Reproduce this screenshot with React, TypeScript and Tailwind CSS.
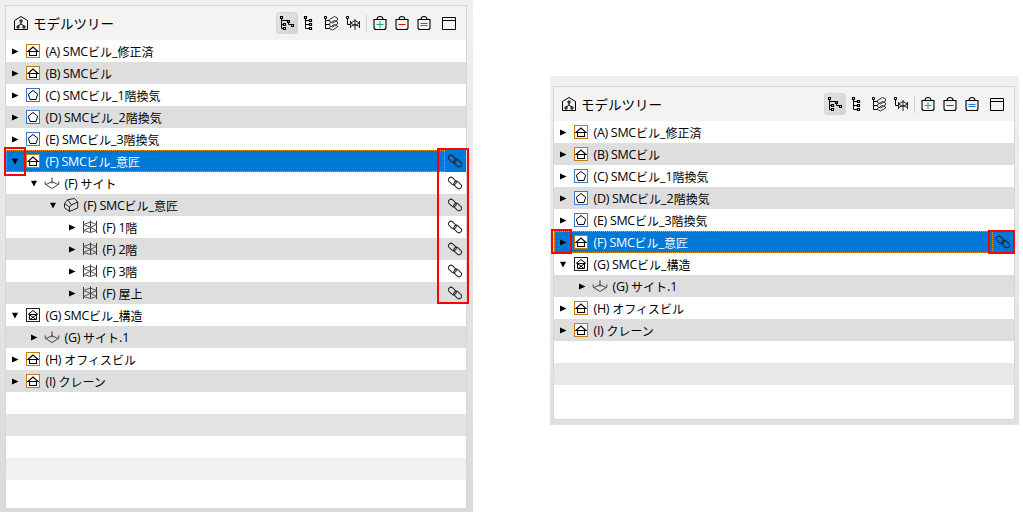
import type { ReactNode } from 'react';

type IconKind = 'house' | 'pentagon' | 'structure' | 'site' | 'building' | 'floor';

type Row = {
  code: string;
  latin?: string;
  jp: string;
  suffix?: string;
  tail?: string;
  icon: IconKind;
  depth: number;
  open?: boolean;
  selected?: boolean;
  linked?: boolean;
};

const top: Row[] = [
  { code: '(A)', latin: 'SMC', jp: 'ビル', suffix: '_', tail: '修正済', icon: 'house', depth: 0 },
  { code: '(B)', latin: 'SMC', jp: 'ビル', icon: 'house', depth: 0 },
  { code: '(C)', latin: 'SMC', jp: 'ビル', suffix: '_1', tail: '階換気', icon: 'pentagon', depth: 0 },
  { code: '(D)', latin: 'SMC', jp: 'ビル', suffix: '_2', tail: '階換気', icon: 'pentagon', depth: 0 },
  { code: '(E)', latin: 'SMC', jp: 'ビル', suffix: '_3', tail: '階換気', icon: 'pentagon', depth: 0 },
];

const bottom: Row[] = [
  { code: '(G)', latin: 'SMC', jp: 'ビル', suffix: '_', tail: '構造', icon: 'structure', depth: 0, open: true },
  { code: '(G)', jp: 'サイト', suffix: '.1', icon: 'site', depth: 1 },
  { code: '(H)', jp: 'オフィスビル', icon: 'house', depth: 0 },
  { code: '(I)', jp: 'クレーン', icon: 'house', depth: 0 },
];

const selectedRow: Row = {
  code: '(F)', latin: 'SMC', jp: 'ビル', suffix: '_', tail: '意匠', icon: 'house', depth: 0, selected: true, linked: true,
};

const expandedRows: Row[] = [
  ...top,
  { ...selectedRow, open: true },
  { code: '(F)', jp: 'サイト', icon: 'site', depth: 1, open: true, linked: true },
  { code: '(F)', latin: 'SMC', jp: 'ビル', suffix: '_', tail: '意匠', icon: 'building', depth: 2, open: true, linked: true },
  { code: '(F)', latin: '1', jp: '階', icon: 'floor', depth: 3, linked: true },
  { code: '(F)', latin: '2', jp: '階', icon: 'floor', depth: 3, linked: true },
  { code: '(F)', latin: '3', jp: '階', icon: 'floor', depth: 3, linked: true },
  { code: '(F)', jp: '屋上', icon: 'floor', depth: 3, linked: true },
  ...bottom,
];

const collapsedRows: Row[] = [...top, selectedRow, ...bottom];

const indents = ['pl-1.5', 'pl-[25px]', 'pl-[44px]', 'pl-[63px]'];

function Glyph({ children, className = '' }: { children: ReactNode; className?: string }) {
  return (
    <svg viewBox="0 0 16 16" className={`block h-4 w-4 shrink-0 ${className}`} fill="none" stroke="#000" strokeWidth="1">
      {children}
    </svg>
  );
}

function RowIcon({ kind }: { kind: IconKind }) {
  if (kind === 'house') {
    return (
      <Glyph>
        <rect x="1.5" y="1.5" width="13" height="13" fill="#fff" stroke="#c27c0e" />
        <path d="M3 8.5 8 4l5 4.5zM4.5 8.5v4h7v-4" strokeWidth="1.1" />
      </Glyph>
    );
  }
  if (kind === 'pentagon') {
    return (
      <Glyph>
        <rect x="1.5" y="1.5" width="13" height="13" fill="#fff" stroke="#3f78c3" />
        <path d="M8 3.5 12.7 7.2 11 12.5H5L3.3 7.2z" />
      </Glyph>
    );
  }
  if (kind === 'structure') {
    return (
      <Glyph>
        <rect x="1.5" y="1.5" width="13" height="13" fill="#fff" stroke="#222" />
        <path d="M3 7.5 8 3.5l5 4M4.5 6.5v6h7v-6M4.5 7.5h7M5 8l6 4.5M11 8l-6 4.5" />
      </Glyph>
    );
  }
  if (kind === 'site') {
    return (
      <Glyph>
        <path d="M8 2.5v6" stroke="#333" />
        <path d="M1.2 6.5v2.7L8 13.5l6.800-4.300V6.500M2 9.500l6-2.800 6 2.800" stroke="#444" />
      </Glyph>
    );
  }
  if (kind === 'building') {
    return (
      <Glyph>
        <path d="M1.5 6.5 4.500 2.800 11.500 1.500 14.700 5 8.500 8 4.500 2.800M1.500 6.500v4.200L6.500 14.500V10L1.500 6.500M6.500 10l2-2M6.500 14.500l8.200-3.500V5" stroke="#222" />
      </Glyph>
    );
  }
  return (
    <Glyph>
      <path d="M1.5 2v12M14.5 2v12M8.500 1.500v12" stroke="#333" />
      <path d="M1.500 5.500 8.500 3l6 2.500-6 2.800zM1.500 11.500l7-3.200 6 3.200-6 2z" stroke="#555" />
    </Glyph>
  );
}

function LinkIcon() {
  return (
    <Glyph>
      <g strokeWidth="1" stroke="#222">
        <rect x="1" y="3.5" width="8.6" height="5" rx="2.5" transform="rotate(43 5.3 6)" />
        <rect x="6.4" y="7.5" width="8.6" height="5" rx="2.5" transform="rotate(43 10.7 10)" />
      </g>
    </Glyph>
  );
}

function TreeRow({ row }: { row: Row }) {
  return (
    <div
      className={`flex h-[22px] ${row.selected ? 'bg-[#0078d7] text-white' : 'text-black odd:bg-white even:bg-[#dedede]'}`}
    >
      <div
        className={`flex flex-1 items-center ${indents[row.depth]} ${
          row.selected ? 'outline-1 -outline-offset-1 outline-dotted outline-[#ff9428]' : ''
        }`}
      >
        <svg viewBox="0 0 7 7" className="h-[7px] w-[7px] shrink-0 fill-black">
          <path d={row.open ? 'M0 .8h6L3 6.500z' : 'M0 .5v6L6.500 3.500z'} />
        </svg>
        <span className="ml-1.5">
          <RowIcon kind={row.icon} />
        </span>
        <span className="ml-[4.500px] flex pt-px whitespace-pre font-['Open_Sans','Noto_Sans_CJK_JP',sans-serif] text-[12.5px] leading-[21px]">
          <span className="tracking-[-0.3px]">{row.code} {row.latin}</span>
          <span className="font-['Noto_Sans_CJK_JP',sans-serif] text-[12px]">{row.jp}</span>
          <span>{row.suffix}</span>
          <span className="font-['Noto_Sans_CJK_JP',sans-serif] text-[12px]">{row.tail}</span>
        </span>
      </div>
      <div className="flex w-[21px] items-center pl-0.5">{row.linked && <LinkIcon />}</div>
    </div>
  );
}

function BagIcon({ mark, color }: { mark: string; color: string }) {
  return (
    <span className="flex w-[22px] justify-center pl-1">
      <Glyph>
        <path d="M2 4.5h12v8q0 2-2 2H4q-2 0-2-2zM5 4.500q0-3 3-3t3 3" strokeWidth="1.100" />
        <path d={mark} className={color} />
      </Glyph>
    </span>
  );
}

function TreeTools() {
  return (
    <div className="flex items-center">
      <span className="flex h-[22px] w-[22px] items-center justify-center rounded-[3px] border border-[#d6d6d6] bg-linear-to-br from-[#e5e5e5] to-[#d2d2d2]">
        <Glyph>
          <path d="M2.5 3v10.5h2M2.5 5.5h6M2.5 9.5h2M9.5 6.5v3h3" />
          <path d="M1.500 1.500h2v2h-2zM8.500 5.500h2v2h-2zM4.500 8.500h2v2h-2zM4.500 12.500h2v2h-2zM12.500 9.500h2v2h-2z" strokeWidth="1.100" />
        </Glyph>
      </span>
      <span className="flex w-[22px] justify-center">
        <Glyph>
          <path d="M4.500 3v10.500h4M4.500 5.500h4M4.500 9.500h4" />
          <path d="M3.500 1.500h2v2h-2zM8.500 4.500h2v2h-2zM8.500 8.500h2v2h-2zM8.500 12.500h2v2h-2z" strokeWidth="1.200" />
        </Glyph>
      </span>
      <span className="flex w-[22px] justify-center">
        <Glyph>
          <path d="M2.500 3v10.500h4M2.500 5.500h4M2.500 9.500h4M1.500 1.500h2v2h-2z" />
          <path
            d="M6.500 4.500 11.500 1.500l3 1.500v2L9.500 8l-3-1.500zM6.500 8.500l5-3 3 1.500v2l-5 3-3-1.500zM6.500 12.500l5-3 3 1.500v1l-5 3-3-1.500z"
            stroke="#333"
          />
        </Glyph>
      </span>
      <span className="flex w-[22px] justify-center">
        <Glyph>
          <path d="M2.500 3v6.500h3M1.500 1.500h2v2h-2z" />
          <path d="M5.500 6v7M14.500 6v7M10 4v11M5.500 8 10 5.500 14.500 8 10 10.500zM5.500 11.500l4.500-2 4.500 2" stroke="#222" />
        </Glyph>
      </span>
      <span className="ml-0.5 h-[17px] w-px bg-[#d0d0d0]" />
      <BagIcon mark="M4.500 9.500h7M8 6v7" color="stroke-[#00b96b]" />
      <BagIcon mark="M4.500 9.500h7" color="stroke-[#f00000]" />
      <BagIcon mark="M4.500 8.500h7M4.500 10.500h7" color="stroke-[#1878d0]" />
      <Glyph className="ml-2">
        <path d="M1.500 2.500h13v12h-13zM1.500 5.500h13" />
      </Glyph>
    </div>
  );
}

function ModelTree({ rows, children }: { rows: Row[]; children: ReactNode }) {
  return (
    <div className="flex w-[462px] flex-1 flex-col border border-[#d6d6d6] bg-white">
      <div className="flex h-[34px] shrink-0 items-center justify-between bg-[#f3f3f3] pr-[9px] pl-[7px]">
        <div className="flex items-center gap-1">
          <Glyph>
            <path d="M1.500 14.500V5.500L8 1.500l6.500 4v9z" />
            <path d="M7 5h2v2H7zM4 11h2v2H4zM10 11h2v2h-2zM8 7v2M5 11l3-2 3 2" />
          </Glyph>
          <h2 className="font-['Noto_Sans_CJK_JP',sans-serif] text-[13.5px] leading-5 font-normal text-black">モデルツリー</h2>
        </div>
        <TreeTools />
      </div>
      <div>
        {rows.map((row, index) => (
          <TreeRow key={index} row={row} />
        ))}
      </div>
      {children}
    </div>
  );
}

export default function App() {
  return (
    <main className="relative flex h-[512px] w-[1023px] overflow-hidden bg-white">
      <section className="flex h-[512px] w-[473px] bg-linear-to-b from-[#f0f0f0] to-[#dadada] pt-[5px] pb-[3px] pl-[5px]">
        <ModelTree rows={expandedRows}>
          <div className="mt-[22px] h-[22px] bg-[#e4e4e4]" />
          <div className="mt-[22px] h-[22px] bg-[#f1f1f1]" />
        </ModelTree>
        <div className="w-1.5 shrink-0" />
      </section>
      <section className="mt-[76px] ml-[77px] flex h-[349px] w-[469px] bg-linear-to-b from-[#f0f0f0] to-[#e0e0e0] pt-2.5 pb-[5px] pl-[3px]">
        <ModelTree rows={collapsedRows}>
          <div className="mt-[22px] h-[22px] bg-[#e8e8e8]" />
        </ModelTree>
        <div className="w-1 shrink-0" />
      </section>

      {/* Callouts over the expanders and link markers */}
      <div className="absolute top-[147px] left-[4px] h-[29px] w-[22px] border-2 border-[#f00]" />
      <div className="absolute top-[148px] left-[437px] h-[156px] w-8 border-2 border-[#f00]" />
      <div className="absolute top-[229px] left-[551px] h-[25px] w-[21px] border-2 border-[#f00]" />
      <div className="absolute top-[230px] left-[988px] h-6 w-[27px] border-2 border-[#f00]" />
    </main>
  );
}
